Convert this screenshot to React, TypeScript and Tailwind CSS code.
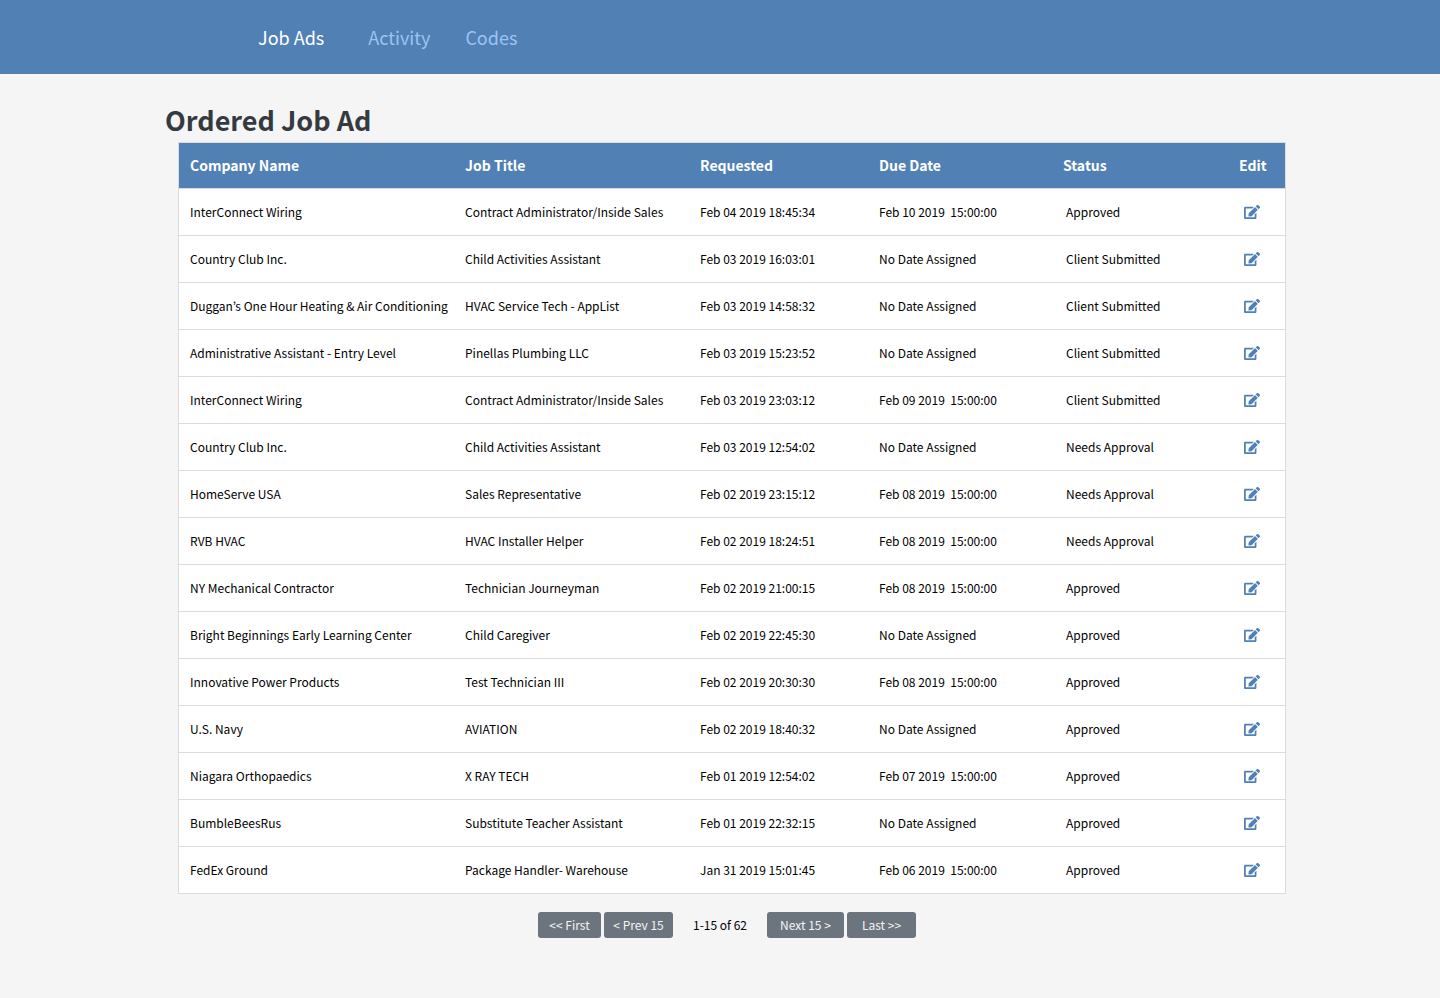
import { FaEdit } from "react-icons/fa";

type JobAd = {
  company: string;
  title: string;
  requested: string;
  due: string;
  status: string;
};

const NONE = "No Date Assigned";

const jobAds: JobAd[] = [
  { company: "InterConnect Wiring", title: "Contract Administrator/Inside Sales", requested: "Feb 04 2019 18:45:34", due: "Feb 10 2019  15:00:00", status: "Approved" },
  { company: "Country Club Inc.", title: "Child Activities Assistant", requested: "Feb 03 2019 16:03:01", due: NONE, status: "Client Submitted" },
  { company: "Duggan’s One Hour Heating & Air Conditioning", title: "HVAC Service Tech - AppList", requested: "Feb 03 2019 14:58:32", due: NONE, status: "Client Submitted" },
  { company: "Administrative Assistant - Entry Level", title: "Pinellas Plumbing LLC", requested: "Feb 03 2019 15:23:52", due: NONE, status: "Client Submitted" },
  { company: "InterConnect Wiring", title: "Contract Administrator/Inside Sales", requested: "Feb 03 2019 23:03:12", due: "Feb 09 2019  15:00:00", status: "Client Submitted" },
  { company: "Country Club Inc.", title: "Child Activities Assistant", requested: "Feb 03 2019 12:54:02", due: NONE, status: "Needs Approval" },
  { company: "HomeServe USA", title: "Sales Representative", requested: "Feb 02 2019 23:15:12", due: "Feb 08 2019  15:00:00", status: "Needs Approval" },
  { company: "RVB HVAC", title: "HVAC Installer Helper", requested: "Feb 02 2019 18:24:51", due: "Feb 08 2019  15:00:00", status: "Needs Approval" },
  { company: "NY Mechanical Contractor", title: "Technician Journeyman", requested: "Feb 02 2019 21:00:15", due: "Feb 08 2019  15:00:00", status: "Approved" },
  { company: "Bright Beginnings Early Learning Center", title: "Child Caregiver", requested: "Feb 02 2019 22:45:30", due: NONE, status: "Approved" },
  { company: "Innovative Power Products", title: "Test Technician III", requested: "Feb 02 2019 20:30:30", due: "Feb 08 2019  15:00:00", status: "Approved" },
  { company: "U.S. Navy", title: "AVIATION", requested: "Feb 02 2019 18:40:32", due: NONE, status: "Approved" },
  { company: "Niagara Orthopaedics", title: "X RAY TECH", requested: "Feb 01 2019 12:54:02", due: "Feb 07 2019  15:00:00", status: "Approved" },
  { company: "BumbleBeesRus", title: "Substitute Teacher Assistant", requested: "Feb 01 2019 22:32:15", due: NONE, status: "Approved" },
  { company: "FedEx Ground", title: "Package Handler- Warehouse", requested: "Jan 31 2019 15:01:45", due: "Feb 06 2019  15:00:00", status: "Approved" },
];

const columns = [
  { label: "Company Name", width: "w-[275px]" },
  { label: "Job Title", width: "w-[235px]" },
  { label: "Requested", width: "w-[179px]" },
  { label: "Due Date", width: "w-[184px]" },
  { label: "Status", width: "w-[176px]" },
  { label: "Edit", width: "w-[57px]" },
];

function PageButton({ label, width }: { label: string; width: string }) {
  return (
    <button type="button" className={`${width} h-[26px] rounded-[3px] bg-[#6c757d] text-[#f4f4f4] hover:bg-[#5a6268]`}>
      {label}
    </button>
  );
}

export default function App() {
  return (
    <div className="min-h-screen bg-[#f5f5f5] font-['Noto_Sans_CJK_KR',sans-serif] text-black">
      <header className="bg-[#5080b4]">
        <nav className="flex h-[74px] items-center pl-[258px] text-lg">
          <a href="#job-ads" aria-current="page" className="mr-11 text-white">Job Ads</a>
          <a href="#activity" className="mr-[35px] text-[#9dc3f2]">Activity</a>
          <a href="#codes" className="text-[#9dc3f2]">Codes</a>
        </nav>
      </header>

      <main className="pt-[26px] pr-[154px] pl-[165px]">
        <h1 className="mb-0.5 text-[27px] leading-10 font-bold text-[#343a40]">Ordered Job Ad</h1>

        <div className="ml-[13px] border border-b-0 border-[#dcdcdc] bg-white">
          <table className="w-full table-fixed border-separate border-spacing-0 text-left text-xs">
            <thead>
              <tr className="h-[46px] bg-[#5080b4] text-sm text-white">
                {columns.map((c) => (
                  <th key={c.label} scope="col" className={`${c.width} border-b border-[#dcdcdc] pb-0.5 pl-[11px] font-bold whitespace-nowrap`}>
                    {c.label}
                  </th>
                ))}
              </tr>
            </thead>
            <tbody className="[&_td]:border-b [&_td]:border-[#dcdcdc] [&_td]:whitespace-pre">
              {jobAds.map((ad, i) => (
                <tr key={i} className="h-[47px]">
                  <td className="pl-[11px]">{ad.company}</td>
                  <td className="pl-[11px]">{ad.title}</td>
                  <td className="pl-[11px]">{ad.requested}</td>
                  <td className="pl-[11px]">{ad.due}</td>
                  <td className="pl-[14px]">{ad.status}</td>
                  <td className="pl-4">
                    <button type="button" aria-label={`Edit ${ad.title}`} className="block text-base text-[#5080b4]">
                      <FaEdit />
                    </button>
                  </td>
                </tr>
              ))}
            </tbody>
          </table>
        </div>

        <div className="mt-[18px] flex items-center justify-center gap-[3px] pl-[3px] text-xs">
          <PageButton label="<< First" width="w-[63px]" />
          <PageButton label="< Prev 15" width="w-[69px]" />
          <span className="w-[88px] text-center">1-15 of 62</span>
          <PageButton label="Next 15 >" width="w-[77px]" />
          <PageButton label="Last >>" width="w-[69px]" />
        </div>
      </main>
    </div>
  );
}
